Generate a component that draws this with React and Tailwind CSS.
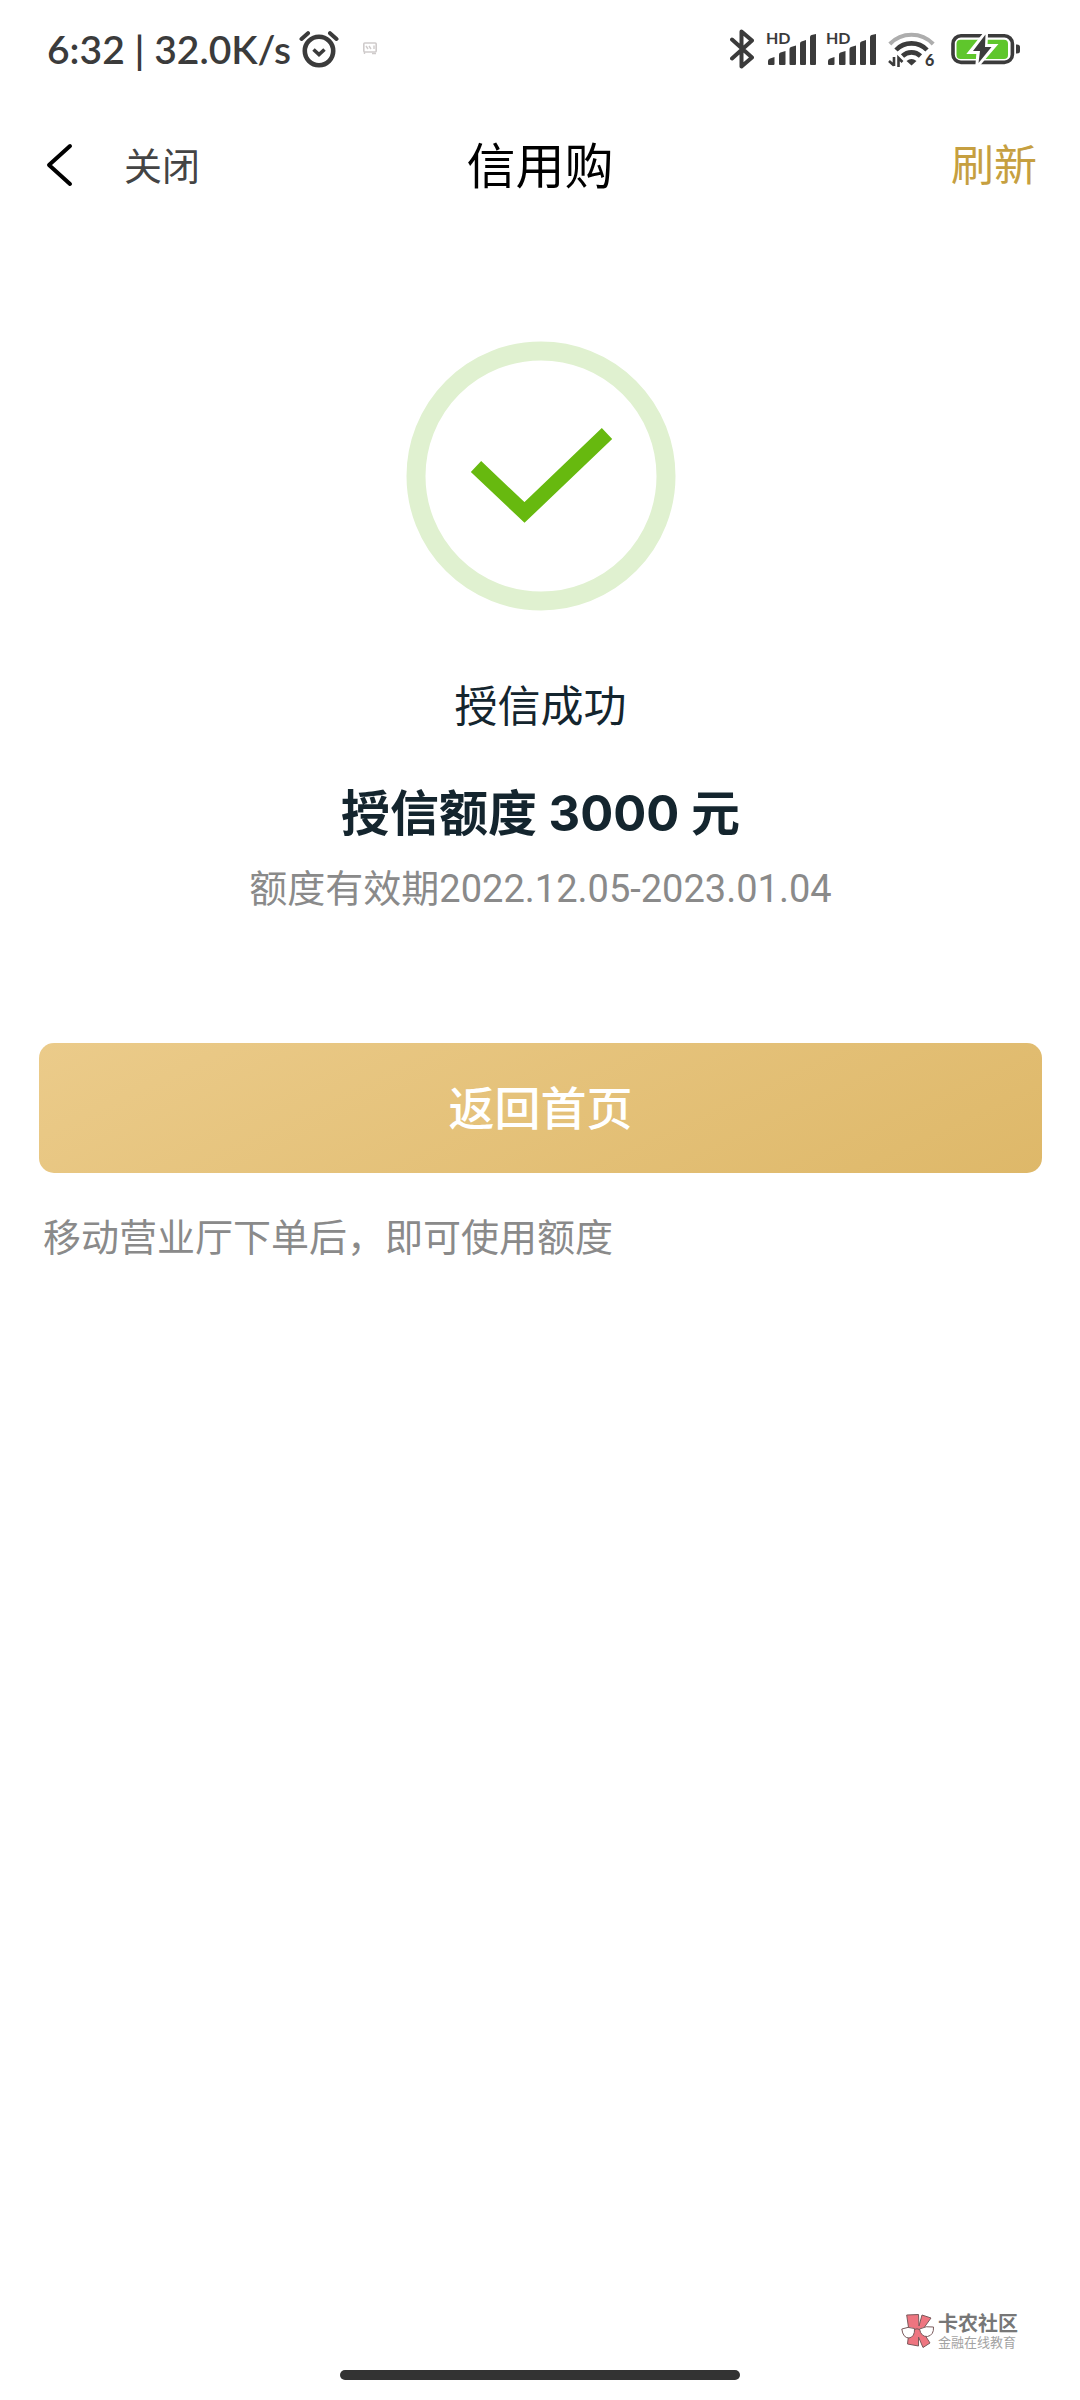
import React from "react";

function AlarmIcon() {
  return (
    <svg width="40" height="40" viewBox="0 0 40 40" fill="none" stroke="#3b3b3b" strokeLinecap="round">
      <circle cx="20" cy="22" r="14.2" strokeWidth="4.6" />
      <path d="M14.5 20.5 L20 25.5 L25.5 20.5" strokeWidth="3.6" strokeLinecap="butt" />
      <path d="M2.5 10 L9 4.2 M37.5 10 L31 4.2" strokeWidth="4" />
    </svg>
  );
}

function CardIcon() {
  return (
    <svg width="14" height="14" viewBox="0 0 14 14" fill="none" stroke="#cfcbcb">
      <rect x="0.8" y="1" width="12.4" height="9" rx="1" strokeWidth="1.6" />
      <path d="M3 4 L5 7 M6 4 L8 7 M11 3.5 V7 M1.5 10 V12 M9 11.5 H13" strokeWidth="1.4" />
    </svg>
  );
}

function BluetoothIcon() {
  return (
    <svg width="24" height="40" viewBox="0 0 24 40" fill="none" stroke="#3b3b3b" strokeWidth="4" strokeLinejoin="round" strokeLinecap="round">
      <path d="M2 10.5 L22 28.5 L11.5 37.5 V2.5 L22 11.5 L2 29.5" />
    </svg>
  );
}

function SignalIcon() {
  return (
    <svg width="51" height="50" viewBox="0 -8 51 50" fill="#3b3b3b">
      <text x="0" y="12" fontSize="16" fontWeight="700" fontFamily="Lato, sans-serif">HD</text>
      <path d="M2 32 V29 Q2 27 4 26.5 L8.5 25 V32 Q8.5 33 7.5 33 H3 Q2 33 2 32 Z" />
      <path d="M13 22.5 Q13 21 14.500 20.5 L19.5 19 V32 Q19.5 33 18.5 33 H14 Q13 33 13 32 Z" />
      <path d="M23.5 17 Q23.5 15.5 25 15 L30 13.5 V32 Q30 33 29 33 H24.5 Q23.5 33 23.5 32 Z" />
      <path d="M34 11.5 Q34 10 35.5 9.5 L40 8 V32 Q40 33 39 33 H35 Q34 33 34 32 Z" />
      <path d="M44 5 Q44 3.5 45.5 3 L50 2 V32 Q50 33 49 33 H45 Q44 33 44 32 Z" />
    </svg>
  );
}

function WifiIcon() {
  return (
    <svg width="50" height="52" viewBox="0 -8 50 52" fill="none" stroke="#3b3b3b" strokeWidth="4.6">
      <path d="M1.8 13 A30 30 0 0 1 45.2 13" stroke="#adadad" strokeWidth="4" />
      <path d="M8 19 A21.5 21.5 0 0 1 39 19" />
      <path d="M14.500 25 A13 13 0 0 1 32.500 25" />
      <path d="M18.5 30 Q23.5 26 28.5 30 L23.5 34.500 Z" fill="#3b3b3b" stroke="none" />
      <path d="M6 26 V35 M1 30 L6 34.500 M10.500 36 V27 L14.500 31" strokeWidth="2.600" />
      <text x="37" y="35" fontSize="16" fontWeight="900" fontFamily="Lato, sans-serif" fill="#3b3b3b" stroke="none">6</text>
    </svg>
  );
}

function BatteryIcon() {
  return (
    <svg width="70" height="36" viewBox="0 0 70 36">
      <rect x="3" y="4.800" width="59.400" height="26.600" rx="8" fill="none" stroke="#3b3b3b" strokeWidth="3.6" />
      <rect x="6.5" y="8.8" width="51.500" height="19.200" rx="4" fill="#5fc62c" />
      <path d="M66 13.500 H67 Q70 13.500 70 16 V20 Q70 22.500 67 22.500 H66 Z" fill="#3b3b3b" />
      <path d="M35.500 3 L21.500 20.500 H29 L28 33 L43 15.500 H35 Z" fill="#fff" stroke="#fff" strokeWidth="5" />
      <path d="M35.500 3.500 L23 20 H30 L28.500 32 L41.500 16 H35 Z" fill="#3b3b3b" />
    </svg>
  );
}

function WatermarkLogo() {
  return (
    <svg width="35" height="38" viewBox="0 0 35 38" stroke="#7a5a5c" strokeWidth="1">
      <path d="M5.700 3 L17.500 2.500 L18 14 L21 3 L30 6 L21 18.500 L29 31 L22 35.500 L17.500 25 V34 L6.500 32 L8 19 Z" fill="#ee7580" />
      <path d="M0.800 17 Q7 14 13.500 16.500 Q14 25 8 26 Q2 26 0.800 17 Z" fill="#fff" />
      <path d="M18.500 17 Q25 13.500 32.500 15 Q33 23 26.500 24.500 Q20 25 18.500 17 Z" fill="#fff" />
      <path d="M13.500 17.500 Q16 16 18.500 17.500" fill="none" />
    </svg>
  );
}

function StatusBar() {
  return (
    <div className="flex h-[98px] items-center justify-between pl-[47px] pr-[60px] text-[#3b3b3b]">
      <div className="flex items-center">
        <span className="text-[39px] font-semibold leading-[46px]">6:32 | 32.0K/s</span>
        <span className="ml-2"><AlarmIcon /></span>
        <span className="ml-6"><CardIcon /></span>
      </div>
      <div className="flex items-center">
        <BluetoothIcon />
        <div className="ml-3 flex gap-[9px]">
          <SignalIcon />
          <SignalIcon />
        </div>
        <span className="ml-[11px]"><WifiIcon /></span>
        <span className="ml-3"><BatteryIcon /></span>
      </div>
    </div>
  );
}

function App() {
  return (
    <div className="flex min-h-screen flex-col bg-white font-['Lato','Noto_Sans_CJK_SC',sans-serif]">
      <StatusBar />

      {/* Navigation */}
      <nav className="grid h-[134px] grid-cols-3 items-center px-[43px]">
        <div className="flex items-center gap-[49px]">
          <button type="button" aria-label="返回">
            <svg width="32" height="44" viewBox="0 0 32 44" fill="none" stroke="#000" strokeWidth="4" strokeLinecap="round" strokeLinejoin="round">
              <path d="M27 3 L6 22 L27 41" />
            </svg>
          </button>
          <button type="button" className="text-[38px] leading-[56px] text-[#444]">关闭</button>
        </div>
        <h1 className="text-center text-[49px] leading-[56px] text-black">信用购</h1>
        <button type="button" className="justify-self-end text-[43px] leading-[56px] text-[#c69f40]">刷新</button>
      </nav>

      {/* Result */}
      <main className="flex flex-1 flex-col pl-[39px] pr-[38px] pt-[109px]">
        <svg className="self-center" width="270" height="270" viewBox="0 0 270 270" fill="none">
          <circle cx="135" cy="135" r="125" stroke="#e0f1d0" strokeWidth="19" />
          <path d="M70 125.5 L118.5 171.5 L201 92.5" stroke="#67b90f" strokeWidth="15" />
        </svg>
        <p className="mt-[67px] text-center text-[43px] leading-[56px] text-[#14252e]">授信成功</p>
        <h2 className="mt-[45px] text-center font-['Inter','Noto_Sans_CJK_SC',sans-serif] text-[49px] font-bold leading-[70px] text-[#14252e]">
          授信额度 3000 元
        </h2>
        <p className="mt-3 text-center font-['Roboto','Noto_Sans_CJK_SC',sans-serif] text-[38px] leading-[56px] text-[#8a8a8a]">
          额度有效期2022.12.05-2023.01.04
        </p>
        <button
          type="button"
          className="mt-[126px] h-[130px] rounded-[15px] bg-[linear-gradient(155deg,#ebcb8a,#deb869)] text-[46px] font-medium leading-[56px] text-white"
        >
          返回首页
        </button>
        <p className="mt-[35px] px-1 text-[38px] leading-[56px] text-[#8a8a8a]">移动营业厅下单后，即可使用额度</p>
      </main>

      {/* Watermark and home indicator */}
      <footer className="flex flex-col pb-5">
        <div className="flex items-center gap-0.5 self-end pr-[62px]">
          <WatermarkLogo />
          <div className="flex flex-col">
            <span className="text-[20px] font-bold leading-[22px] text-[#777]">卡农社区</span>
            <span className="text-[13px] leading-[16px] text-[#a3a3a3]">金融在线教育</span>
          </div>
        </div>
        <div className="mt-5 h-2.5 w-[400px] self-center rounded-full bg-[#333]" />
      </footer>
    </div>
  );
}

export default App;
